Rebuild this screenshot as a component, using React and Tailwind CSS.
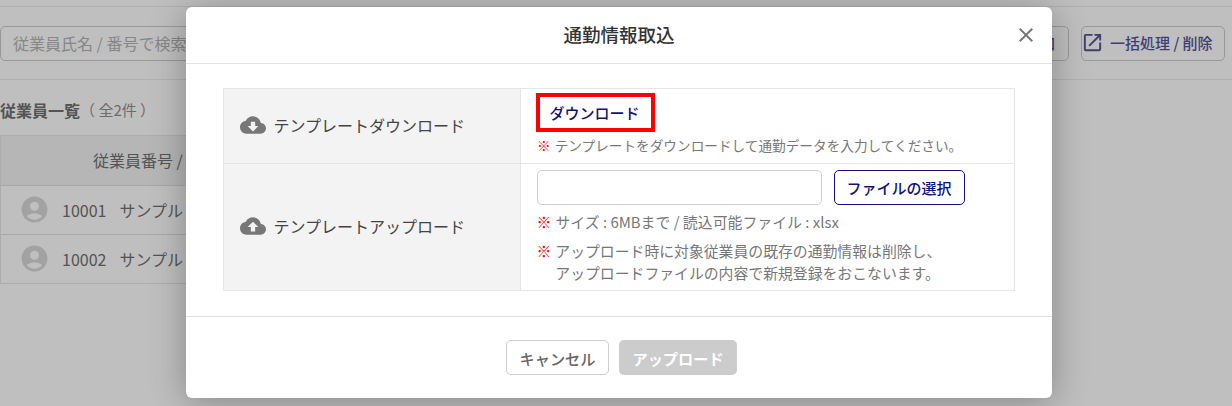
import { MdAccountCircle, MdClose, MdCloudDownload, MdCloudUpload, MdOpenInNew } from 'react-icons/md';

const employees = [
  { id: '10001', name: 'サンプル' },
  { id: '10002', name: 'サンプル' },
];

function EmployeePage() {
  return (
    <div className="h-[406px] overflow-hidden whitespace-nowrap bg-white pt-1.5 text-[#707070]">
      <div className="flex h-[74px] items-center justify-between border-y border-[#eaeaea] pr-[7px]">
        <div className="flex h-[35px] w-[400px] items-center rounded-[5px] border border-[#ccc] pl-3 text-base leading-none text-[#b4b4b4]">
          従業員氏名 / 番号で検索
        </div>
        <div className="flex gap-3 text-[15px] font-medium text-[#55539a]">
          <div className="flex h-[35px] w-[100px] items-center justify-end rounded-[5px] border border-[#ccc] pr-[13px]">
            追加
          </div>
          <div className="flex h-[35px] w-36 items-center rounded-[5px] border border-[#ccc]">
            <MdOpenInNew size={23} className="-ml-px mb-0.5" />
            <span className="ml-1.5">一括処理 / 削除</span>
          </div>
        </div>
      </div>
      <div className="flex h-[55px] items-center pt-1.5">
        <span className="pb-0.5 text-base font-bold">従業員一覧</span>
        <span className="text-[15px] text-[#909090]">（ 全2件 ）</span>
      </div>
      <div className="w-[600px] border border-[#e6e6e6]">
        <div className="flex h-[49px] items-center bg-[#f3f3f3] pb-0.5 pl-[92px] text-base">従業員番号 / 氏名</div>
        {employees.map((e) => (
          <div key={e.id} className="flex h-[49px] items-center border-t border-[#e0e0e0] pb-px pl-[18px] text-base">
            <MdAccountCircle size={31} className="text-[#d8d8d8]" />
            <span className="ml-3">{e.id}</span>
            <span className="ml-[13px]">{e.name}</span>
          </div>
        ))}
      </div>
    </div>
  );
}

function Note({ className, children }) {
  return (
    <div className={`flex text-[#777] ${className}`}>
      <span className="mr-1 shrink-0 text-[#f00]">※</span>
      <span>{children}</span>
    </div>
  );
}

function ImportModal() {
  return (
    <div className="flex h-[391px] w-[866px] flex-col rounded-md bg-white shadow-[0_4px_36px_rgba(0,0,0,0.3)]">
      <header className="relative flex h-[57px] shrink-0 items-center justify-center border-b border-[#e3e3e3]">
        <h2 className="text-[18.5px] font-medium text-[#333]">通勤情報取込</h2>
        <MdClose size={24} className="absolute right-3.5 top-4 text-[#777]" />
      </header>
      <div className="ml-[36.5px] mt-6 grid h-[203px] w-[792px] grid-cols-[297px_1fr] grid-rows-[75px_1fr] border border-[#e6e6e6]">
        <div className="flex items-center border-b border-r border-[#e6e6e6] bg-[#f3f3f3] pb-0.5 pl-4 text-base text-[#444]">
          <MdCloudDownload size={26} className="mr-2 text-[#777]" />
          テンプレートダウンロード
        </div>
        <div className="border-b border-[#e6e6e6] pl-[15.5px] pt-1">
          <div className="flex h-[39px] w-[119px] items-center justify-center border-4 border-[#f00] pr-0.5 pt-0.5 text-[15px] font-medium text-[#11117a]">
            ダウンロード
          </div>
          <Note className="mt-0.5 pl-px text-[13.65px] leading-[23px]">
            テンプレートをダウンロードして通勤データを入力してください。
          </Note>
        </div>
        <div className="flex items-center border-r border-[#e6e6e6] bg-[#f3f3f3] pb-0.5 pl-4 text-base text-[#444]">
          <MdCloudUpload size={26} className="mr-2 text-[#777]" />
          テンプレートアップロード
        </div>
        <div className="pl-4 pt-1.5">
          <div className="flex gap-3">
            <div className="h-[35px] w-[285px] rounded-[5px] border border-[#ccc]" />
            <div className="flex h-[35px] w-[131px] items-center justify-center rounded-[5px] border border-[#11117a] pt-px text-[15px] font-medium text-[#11117a]">
              ファイルの選択
            </div>
          </div>
          <Note className="mt-1.5 text-[14.9px] leading-[22px]">サイズ : 6MBまで / 読込可能ファイル : xlsx</Note>
          <Note className="mt-[7px] text-[14.85px] leading-[22px]">
            アップロード時に対象従業員の既存の通勤情報は削除し、
            <br />
            アップロードファイルの内容で新規登録をおこないます。
          </Note>
        </div>
      </div>
      <footer className="mt-[25px] flex flex-1 items-start justify-center gap-2.5 border-t border-[#e0e0e0] pl-[5px] pt-[23px] text-[15px] font-medium">
        <div className="flex h-[35px] w-[103px] items-center justify-center rounded-[5px] border border-[#ccc] pt-px text-[15.2px] text-[#666]">
          キャンセル
        </div>
        <div className="flex h-[35px] w-[118px] items-center justify-center rounded-[5px] bg-[#ccc] pt-0.5 text-[15.2px] font-bold text-white">
          アップロード
        </div>
      </footer>
    </div>
  );
}

export default function App() {
  return (
    <div className="relative h-[406px] w-[1232px] overflow-hidden font-['Noto_Sans_CJK_JP',sans-serif]">
      <EmployeePage />
      <div className="absolute inset-0 flex justify-center bg-black/25 pl-1.5 pt-[7px]">
        <ImportModal />
      </div>
    </div>
  );
}
